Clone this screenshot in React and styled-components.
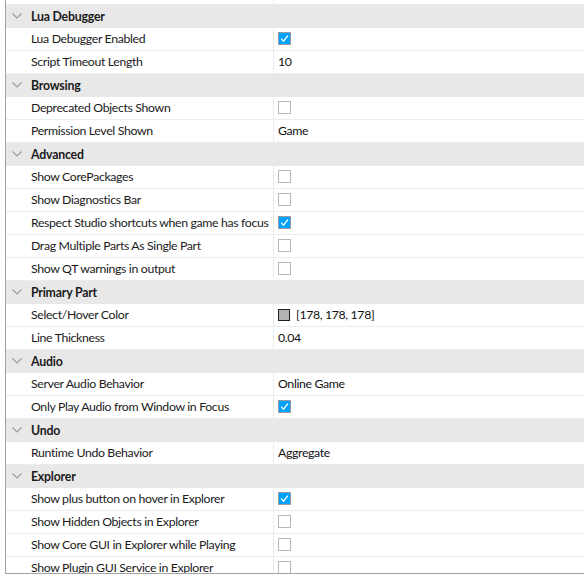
import { useLayoutEffect, useRef } from 'react';
import styled, { createGlobalStyle } from 'styled-components';

const sections = [
  {
    title: 'Lua Debugger',
    rows: [
      { label: 'Lua Debugger Enabled', type: 'check', value: true },
      { label: 'Script Timeout Length', type: 'text', value: '10' },
    ],
  },
  {
    title: 'Browsing',
    rows: [
      { label: 'Deprecated Objects Shown', type: 'check', value: false },
      { label: 'Permission Level Shown', type: 'text', value: 'Game' },
    ],
  },
  {
    title: 'Advanced',
    rows: [
      { label: 'Show CorePackages', type: 'check', value: false },
      { label: 'Show Diagnostics Bar', type: 'check', value: false },
      { label: 'Respect Studio shortcuts when game has focus', type: 'check', value: true },
      { label: 'Drag Multiple Parts As Single Part', type: 'check', value: false },
      { label: 'Show QT warnings in output', type: 'check', value: false },
    ],
  },
  {
    title: 'Primary Part',
    rows: [
      { label: 'Select/Hover Color', type: 'color', value: '[178, 178, 178]', color: '#b2b2b2' },
      { label: 'Line Thickness', type: 'text', value: '0.04' },
    ],
  },
  {
    title: 'Audio',
    rows: [
      { label: 'Server Audio Behavior', type: 'text', value: 'Online Game' },
      { label: 'Only Play Audio from Window in Focus', type: 'check', value: true },
    ],
  },
  {
    title: 'Undo',
    rows: [
      { label: 'Runtime Undo Behavior', type: 'text', value: 'Aggregate' },
    ],
  },
  {
    title: 'Explorer',
    rows: [
      { label: 'Show plus button on hover in Explorer', type: 'check', value: true },
      { label: 'Show Hidden Objects in Explorer', type: 'check', value: false },
      { label: 'Show Core GUI in Explorer while Playing', type: 'check', value: false },
      { label: 'Show Plugin GUI Service in Explorer', type: 'check', value: false },
    ],
  },
];

function Chevron() {
  return (
    <svg width="10" height="6" viewBox="0 0 10 6">
      <path d="M0.5 0.5 L5 5 L9.5 0.5" fill="none" stroke="#9a9a9a" strokeWidth="1.1" />
    </svg>
  );
}

function Check({ checked }) {
  return (
    <CheckBox checked={checked}>
      {checked && (
        <svg width="11" height="11" viewBox="0 0 11 11">
          <path d="M2.2 5.6 L4.5 8.1 L8.9 2.6" fill="none" stroke="#fff" strokeWidth="1.4" />
        </svg>
      )}
    </CheckBox>
  );
}

function Value({ row }) {
  if (row.type === 'check') return <Check checked={row.value} />;
  if (row.type === 'color') {
    return (
      <>
        <Swatch color={row.color} />
        <ValueText>{row.value}</ValueText>
      </>
    );
  }
  return <ValueText>{row.value}</ValueText>;
}

export default function App() {
  const panelRef = useRef(null);

  useLayoutEffect(() => {
    // the list is scrolled a bit in the reference
    if (panelRef.current) panelRef.current.scrollTop = 18;
  }, []);

  return (
    <>
      <GlobalStyle />
      <Frame>
        <Panel ref={panelRef}>
          <Row>
            <Label />
            <Cell />
          </Row>
          {sections.map((section) => (
            <div key={section.title}>
              <Header>
                <Toggle><Chevron /></Toggle>
                <HeaderTitle>{section.title}</HeaderTitle>
              </Header>
              {section.rows.map((row) => (
                <Row key={row.label}>
                  <Label>{row.label}</Label>
                  <Cell><Value row={row} /></Cell>
                </Row>
              ))}
            </div>
          ))}
        </Panel>
      </Frame>
    </>
  );
}

const GlobalStyle = createGlobalStyle`
  body {
    margin: 0;
    background: #ffffff;
    font-family: "Lato", "Noto Sans", sans-serif;
  }
`;

const Frame = styled.div`
  width: 578px;
  height: 573px;
  margin-left: 5px;
  border-left: 1px solid #a3a3a3;
  border-bottom: 1px solid #a3a3a3;
  overflow: hidden;
`;

const Panel = styled.div`
  height: 100%;
  overflow: hidden;
`;

const Row = styled.div`
  display: grid;
  grid-template-columns: 267px 1fr;
  height: 22px;
  border-bottom: 1px solid #ececec;
  font-size: 12.3px;
  letter-spacing: -0.35px;
  color: #1b1b1b;
`;

const Label = styled.div`
  display: flex;
  align-items: center;
  padding: 0 0 1px 25px;
  white-space: nowrap;
  overflow: hidden;
`;

const Cell = styled.div`
  display: flex;
  align-items: center;
  gap: 6px;
  padding: 0 0 1px 4px;
  border-left: 1px solid #ececec;
`;

const ValueText = styled.span`
  color: #111111;
`;

const Header = styled.div`
  display: flex;
  align-items: center;
  height: 23px;
  padding-bottom: 1px;
  box-sizing: border-box;
  background: #e8e8e8;
`;

const Toggle = styled.span`
  display: flex;
  width: 25px;
  padding-left: 6px;
  box-sizing: border-box;
`;

const HeaderTitle = styled.span`
  font-size: 12.3px;
  letter-spacing: -0.2px;
  font-weight: 700;
  color: #1b1b1b;
`;

const CheckBox = styled.span`
  display: flex;
  align-items: center;
  justify-content: center;
  width: 13px;
  height: 13px;
  box-sizing: border-box;
  border: 1px solid ${(p) => (p.checked ? '#9c9c9c' : '#b8b8b8')};
  background: ${(p) => (p.checked ? '#00a2ff' : '#ffffff')};
`;

const Swatch = styled.span`
  width: 12px;
  height: 12px;
  box-sizing: border-box;
  border: 1px solid #222222;
  background: ${(p) => p.color};
`;
